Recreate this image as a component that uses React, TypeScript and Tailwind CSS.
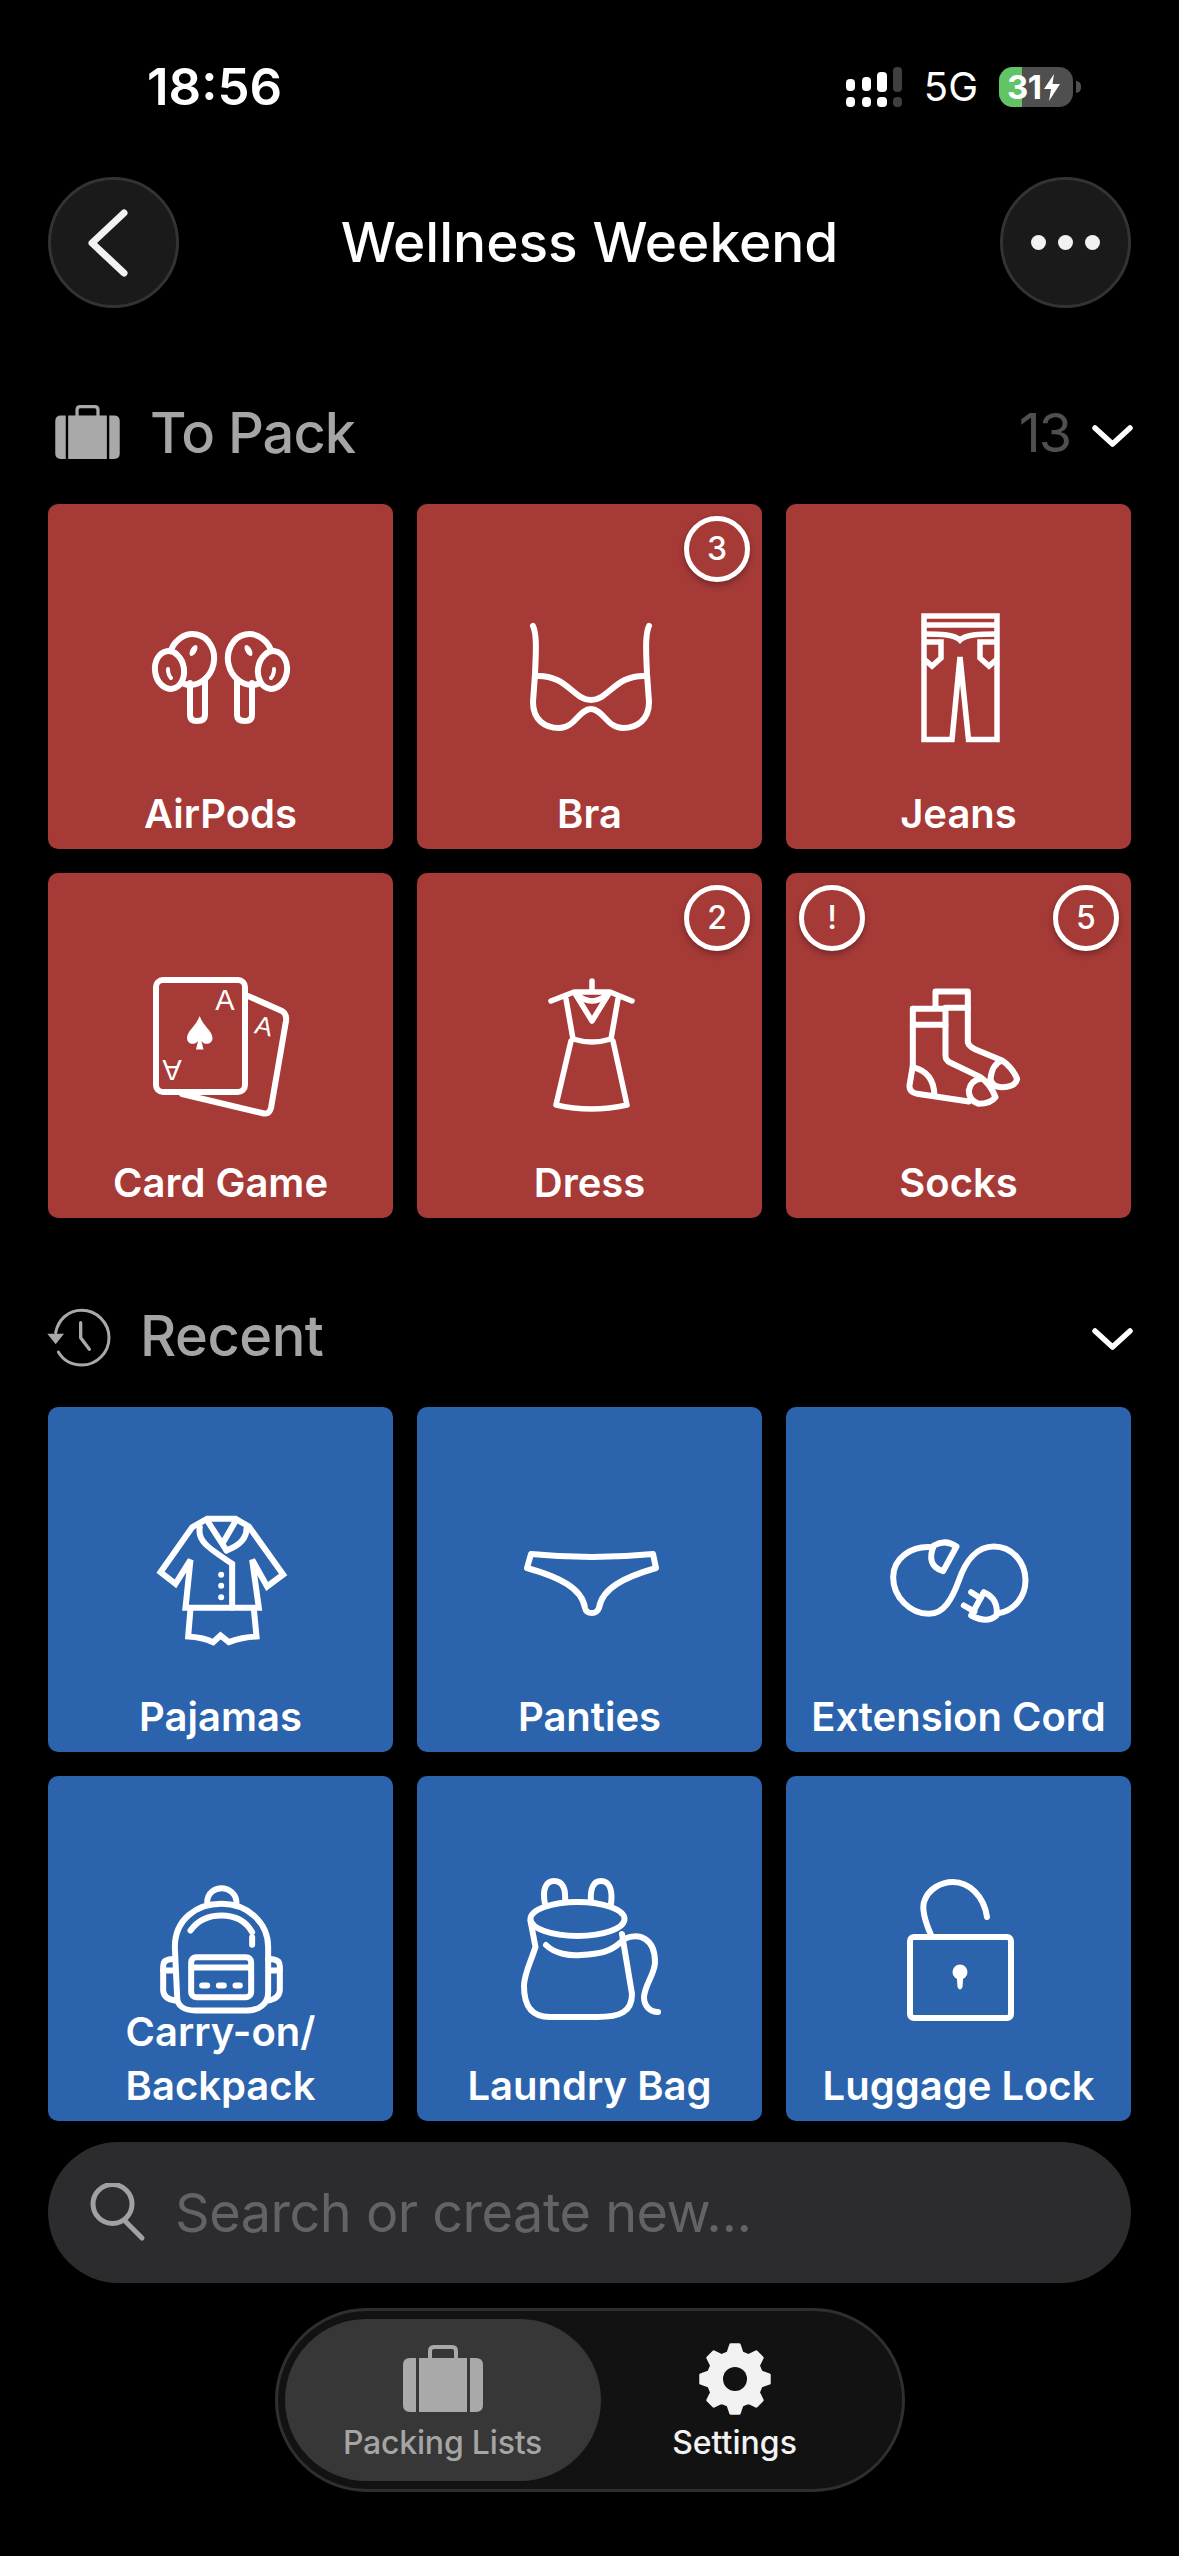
import type { ReactNode } from 'react'

const FONT = 'font-[Inter,sans-serif]'

// all item icons share a 230 box centred on the card
function ItemIcon({ children, width = 6 }: { children: ReactNode; width?: number }) {
    return (
        <svg
            viewBox="0 0 230 230"
            className="w-[230px] h-[230px] [grid-area:1/1] self-center justify-self-center"
            fill="none"
            stroke="#fff"
            strokeWidth={width}
            strokeLinecap="round"
            strokeLinejoin="round"
        >
            {children}
        </svg>
    )
}

const Bud = () => (
    <g>
        <ellipse cx="85.5" cy="97.5" rx="22.5" ry="25.5" transform="rotate(12 85.5 97.5)" />
        <path d="M84 121 V153 Q84 159 91 159 Q99 159 99 153 V118" />
        <ellipse cx="63.5" cy="108" rx="14.5" ry="19" fill="#a53a37" transform="rotate(-8 63.5 108)" />
        <ellipse cx="87.5" cy="88.5" rx="3" ry="6" fill="#fff" stroke="none" transform="rotate(30 87.5 88.5)" />
        <path d="M62 107 Q62 113 65 116" strokeWidth="4" />
    </g>
)

const AirPodsIcon = () => (
    <ItemIcon>
        <Bud />
        <g transform="translate(230 0) scale(-1 1)">
            <Bud />
        </g>
    </ItemIcon>
)

const BraIcon = () => (
    <ItemIcon>
        <path d="M58 64 C62 72 61 90 60 112 L58 140 C58 158 70 166 84 166 C100 166 104 147 116 147 C128 147 132 166 148 166 C162 166 174 158 174 140 L172 112 C171 90 170 72 174 64" />
        <path d="M60 114 C92 112 98 138 116 138 C134 138 140 112 172 114" />
    </ItemIcon>
)

const JeansIcon = () => (
    <ItemIcon width={5.5}>
        <g strokeLinejoin="miter" strokeLinecap="butt">
            <path d="M80 54 H153 V177.5 H124.5 L116 95 L108 177.5 H80 Z" />
            <path d="M80 63 H153" />
            <path d="M80 72 C95 72 110 72 116 78 C122 72 137 72 153 72" />
            <path d="M80 80 H97 V96 L88 104 L80 97" />
            <path d="M153 80 H136 V96 L145 104 L153 97" />
        </g>
    </ItemIcon>
)

const CardsIcon = () => (
    <ItemIcon>
        <rect x="50" y="49" width="89" height="112" rx="7" />
        <path d="M142 65 L176 80 Q181 83 180 90 L165 177 Q163 184 156 182 L76 163" />
        <path d="M93.7 85 C90 95 81 100 81 107 C81 113 88 115 92 110 L90 118.5 H97.5 L95.5 110 C99 115 106.500 113 106.500 107 C106.500 100 97 95 93.7 85 Z" fill="#fff" stroke="none" />
        <g fill="#fff" stroke="none" fontFamily="Liberation Sans, sans-serif" fontSize="29" textAnchor="middle">
            <text x="119" y="79">A</text>
            <text x="66" y="150" transform="rotate(180 66 139.500)">A</text>
            <text x="158" y="104" fontSize="26" transform="rotate(12 158 94)">A</text>
        </g>
    </ItemIcon>
)

const DressIcon = () => (
    <ItemIcon width={5.5}>
        <path d="M117 50 V60" />
        <path d="M76 70 L99 61 H135 L157 70" />
        <path d="M91 68 L98 108 Q117 114 136 108 L143 68" />
        <path d="M101 64 L117 90 L133 64" />
        <path d="M104 65 Q117 75 130 65" />
        <path d="M96 110 L81 174 Q116 182 152 174 L138 110" />
    </ItemIcon>
)

const SocksIcon = () => (
    <ItemIcon>
        <g transform="translate(36.5 44.5) scale(0.3333)" strokeWidth="18">
            <path d="M165 95 V48 H262 V200 Q265 212 285 222 L365 255 Q395 275 410 310 Q405 335 365 335 Q335 335 330 310 Q335 265 365 255" />
            <path d="M195 97 H262" />
            <path d="M97 100 H195 V240 Q195 255 210 262 L300 305 Q330 325 345 365 Q330 385 295 385 Q265 375 265 345 Q270 315 300 310" />
            <path d="M97 100 V270 L87 330 Q85 350 110 355 L265 378" />
            <path d="M97 148 H195" />
            <path d="M97 275 Q160 290 162 360" />
        </g>
    </ItemIcon>
)

const PajamasIcon = () => (
    <ItemIcon>
        <g transform="translate(34.500 35.500) scale(0.3333)" strokeWidth="18" strokeLinejoin="miter">
            <path d="M200 55 H285 L325 78 L428 222 L380 258 L335 178 L355 322 H135 L150 178 L105 250 L60 215 L155 80 Z" />
            <path d="M178 80 C170 120 200 140 275 190 V322" />
            <path d="M200 60 L258 150" />
            <path d="M285 62 L250 122" />
            <path d="M318 85 C318 120 290 138 258 150" />
            <path d="M150 325 L143 408 Q185 410 218 425 L240 405 L265 425 Q305 410 348 408 L340 325" />
            <g fill="#fff" stroke="none">
                <circle cx="242" cy="223" r="9" />
                <circle cx="242" cy="256" r="9" />
                <circle cx="242" cy="290" r="9" />
            </g>
        </g>
    </ItemIcon>
)

const PantiesIcon = () => (
    <ItemIcon>
        <path d="M56 89 Q117 95 178 89 L181 103 C150 112 127 123 124 143 Q122 148 117 148 Q111 148 110 143 C107 123 84 112 52 103 Z" />
    </ItemIcon>
)

const CordIcon = () => (
    <ItemIcon>
        <g transform="translate(36.500 65.500) scale(0.3333)" strokeWidth="18">
            <path d="M155 50 C90 45 38 85 38 140 C38 200 90 250 145 250 C190 250 215 205 235 150 C255 90 290 48 340 48 C395 48 435 95 435 150 C435 200 400 240 355 248" />
            <path d="M160 45 Q195 25 228 48 L188 122 Q135 105 160 45 Z" />
            <path d="M310 185 Q355 205 348 255 Q320 280 272 255 Z" />
            <path d="M272 185 L300 203" />
            <path d="M250 225 L282 243" />
        </g>
    </ItemIcon>
)

const BackpackIcon = () => (
    <ItemIcon>
        <g transform="translate(34.500 41.500) scale(0.3333)" strokeWidth="18">
            <path d="M200 82 C200 50 225 38 243 38 C265 38 288 55 288 82" />
            <path d="M110 365 L103 215 C103 130 170 85 243 85 C320 85 383 140 383 215 L383 350 C383 385 355 405 320 405 H165 C130 405 110 390 110 365 Z" />
            <path d="M150 165 C175 130 210 120 243 120 C280 120 315 135 335 170" />
            <path d="M335 185 V208" />
            <rect x="152" y="245" width="180" height="120" rx="15" />
            <path d="M158 276 H328" />
            <path d="M185 330 H200 M235 330 H250 M285 330 H298" />
            <path d="M103 250 L85 252 Q68 255 68 272 V345 Q70 370 103 375" />
            <path d="M68 285 H100" />
            <path d="M383 250 L400 252 Q418 255 418 272 V345 Q415 370 383 375" />
            <path d="M385 285 H418" />
        </g>
    </ItemIcon>
)

const LaundryIcon = () => (
    <ItemIcon>
        <ellipse cx="102.500" cy="85" rx="47" ry="17" />
        <path d="M70 70 C67 55 71 47 79 47 C88 47 91 55 90 68" />
        <path d="M116 68 C115 55 118 47 126 47 C134 47 138 55 136 70" />
        <path d="M55.500 87 L60.500 113 C55 130 49 140 49 152 C49 170 55 183 75 183 H122 C145 183 157 178 157 160 L147 100" />
        <path d="M71 111 C80 120 95 122 106 121 C125 120 135 118 146 108" />
        <path d="M149 105 C165 98 180 105 180 128 C180 140 170 150 169 163 C169 172 175 178 183 178" />
    </ItemIcon>
)

const LockIcon = () => (
    <ItemIcon>
        <rect x="66" y="103" width="101" height="81" rx="4" />
        <path d="M87 101 C80 85 78 75 80 68 C84 55 97 48 109 48 C125 48 140 62 143 83" />
        <circle cx="116" cy="138" r="7.500" fill="#fff" stroke="none" />
        <path d="M112.500 140 L113.500 153 Q116 158 118.500 153 L119.500 140 Z" fill="#fff" stroke="none" />
    </ItemIcon>
)

const Suitcase = ({ className }: { className: string }) => (
    <svg viewBox="0 0 80 67" className={className} fill="#a9a9a9">
        <path d="M27 17 V6 Q27 2 31 2 H49 Q53 2 53 6 V17" fill="none" stroke="#a9a9a9" strokeWidth="4" />
        <path d="M13 13 H7 Q0 13 0 20 V60 Q0 67 7 67 H13 Z" />
        <rect x="16" y="13" width="48" height="54" />
        <path d="M67 13 H73 Q80 13 80 20 V60 Q80 67 73 67 H67 Z" />
    </svg>
)

// 8 tooth gear, radii tuned against the tab bar icon
const gearPoints = Array.from({ length: 8 }, (_, i) => {
    const pt = (deg: number, r: number) => {
        const a = ((i * 45 + deg - 90) * Math.PI) / 180
        return `${(37 + r * Math.cos(a)).toFixed(2)},${(37 + r * Math.sin(a)).toFixed(2)}`
    }
    return [pt(-15, 27), pt(-7, 34.5), pt(7, 34.5), pt(15, 27)].join(' ')
}).join(' ')

const Gear = () => (
    <svg viewBox="0 0 74 74" className="w-[74px] h-[74px]">
        <polygon points={gearPoints} fill="#f2f2f2" stroke="#f2f2f2" strokeWidth="3" strokeLinejoin="round" />
        <circle cx="37" cy="37" r="12" fill="#121212" />
    </svg>
)

const Chevron = () => (
    <svg viewBox="0 0 41 22" className="w-[41px] h-[22px]" fill="none" stroke="#fff" strokeWidth="5.5" strokeLinecap="round" strokeLinejoin="round">
        <path d="M3 3 L20.500 19 L38 3" />
    </svg>
)

function Badge({ label, left }: { label: string; left?: boolean }) {
    return (
        <div
            className={`[grid-area:1/1] self-start mt-3 w-[66px] h-[66px] rounded-full border-[5px] border-white flex items-center justify-center text-white text-[32px] font-medium shadow-[0_3px_6px_rgba(0,0,0,0.3)] ${
                left ? 'justify-self-start ml-[13px]' : 'justify-self-end mr-3'
            }`}
        >
            {label}
        </div>
    )
}

interface Item {
    name: string
    icon: ReactNode
    count?: string
    alert?: boolean
}

function ItemCard({ item, color }: { item: Item; color: string }) {
    return (
        <div className={`grid h-[345px] rounded-[10px] overflow-hidden ${color}`}>
            <div className="contents">{item.icon}</div>
            {item.alert && <Badge label="!" left />}
            {item.count && <Badge label={item.count} />}
            <div className="[grid-area:1/1] self-end text-center whitespace-pre-line text-white text-[40px] leading-[54px] font-semibold pb-2">
                {item.name}
            </div>
        </div>
    )
}

const toPack: Item[] = [
    { name: 'AirPods', icon: <AirPodsIcon /> },
    { name: 'Bra', icon: <BraIcon />, count: '3' },
    { name: 'Jeans', icon: <JeansIcon /> },
    { name: 'Card Game', icon: <CardsIcon /> },
    { name: 'Dress', icon: <DressIcon />, count: '2' },
    { name: 'Socks', icon: <SocksIcon />, count: '5', alert: true },
]

const recent: Item[] = [
    { name: 'Pajamas', icon: <PajamasIcon /> },
    { name: 'Panties', icon: <PantiesIcon /> },
    { name: 'Extension Cord', icon: <CordIcon /> },
    { name: 'Carry-on/\nBackpack', icon: <BackpackIcon /> },
    { name: 'Laundry Bag', icon: <LaundryIcon /> },
    { name: 'Luggage Lock', icon: <LockIcon /> },
]

function StatusBar() {
    return (
        <div className="h-[177px] pt-[67px] pl-[147px] pr-[98px] flex items-start justify-between text-white">
            <span className="text-[51px] leading-10 font-semibold">18:56</span>
            <div className="flex items-center h-10">
                <svg viewBox="0 0 56 40" className="w-14 h-10" fill="#fff">
                    <rect x="0" y="12" width="9" height="12" rx="4" />
                    <rect x="16" y="10" width="9" height="14" rx="4" />
                    <rect x="31" y="5" width="10" height="20" rx="4" />
                    <rect x="47" y="0" width="9" height="25" rx="4" fill="#3f3f3f" />
                    <rect x="0" y="30" width="9" height="10" rx="4" />
                    <rect x="16" y="30" width="9" height="10" rx="4" />
                    <rect x="31" y="30" width="10" height="10" rx="4" />
                    <rect x="47" y="30" width="9" height="10" rx="4" fill="#3f3f3f" />
                </svg>
                <span className="ml-[22px] text-[40px] leading-10 font-normal">5G</span>
                <div className="ml-[21px] w-[74px] h-10 rounded-[14px] overflow-hidden bg-[#4f4f4f] flex relative">
                    <div className="w-[23px] bg-[#63c466]" />
                    <div className="absolute inset-0 flex items-center pl-[8px] gap-[2px]">
                        <span className="text-[33px] leading-none font-bold tracking-[-0.5px]">31</span>
                        <svg viewBox="0 0 16 27" className="w-4 h-[27px]" fill="#fff">
                            <path d="M10 0 L0 15 H7 L5 27 L16 10 H8.500 Z" />
                        </svg>
                    </div>
                </div>
                <div className="ml-[3px] w-[5px] h-[12px] bg-[#4f4f4f] rounded-r-full" />
            </div>
        </div>
    )
}

export default function App() {
    return (
        <div className={`w-[1179px] h-[2556px] bg-black overflow-hidden flex flex-col ${FONT}`}>
            <StatusBar />

            <div className="h-[131px] px-12 flex items-center justify-between">
                <button className="w-[131px] h-[131px] rounded-full bg-[#1a1a1a] border-[3px] border-[#333] flex items-center justify-center">
                    <svg viewBox="0 0 44 70" className="w-11 h-[70px] -ml-3" fill="none" stroke="#f2f2f2" strokeWidth="7" strokeLinecap="round" strokeLinejoin="round">
                        <path d="M38 5 L6 35 L38 65" />
                    </svg>
                </button>
                <h1 className="text-white text-[55px] font-medium leading-none">Wellness Weekend</h1>
                <button className="w-[131px] h-[131px] rounded-full bg-[#1a1a1a] border-[3px] border-[#333] flex items-center justify-center gap-[12px]">
                    <span className="w-[15px] h-[15px] rounded-full bg-[#f2f2f2]" />
                    <span className="w-[15px] h-[15px] rounded-full bg-[#f2f2f2]" />
                    <span className="w-[15px] h-[15px] rounded-full bg-[#f2f2f2]" />
                </button>
            </div>

            <div className="px-12 flex flex-col">
                <div className="h-[60px] mt-[95px] mb-[41px] flex items-center">
                    <Suitcase className="w-[65px] h-[54px] ml-[7px] -mt-0.5" />
                    <span className="ml-[30px] text-[56px] leading-none font-medium tracking-[-1px] text-[#a5a5a5]">To Pack</span>
                    <span className="ml-auto text-[54px] leading-none font-normal tracking-[-2px] text-[#4f4f4f]">13</span>
                    <div className="ml-[22px] -mr-0.5 mt-[6px] flex">
                        <Chevron />
                    </div>
                </div>
                <div className="grid grid-cols-3 gap-6">
                    {toPack.map((item) => (
                        <ItemCard key={item.name} item={item} color="bg-[#a53a37]" />
                    ))}
                </div>

                <div className="h-[60px] mt-[88px] mb-[41px] flex items-center">
                    <svg viewBox="0 0 240 270" className="w-20 h-[90px] -ml-2 shrink-0" fill="none" stroke="#a9a9a9" strokeWidth="9" strokeLinecap="round" strokeLinejoin="round">
                        <path d="M47 125 C55 85 85 58 125 58 C170 58 207 95 207 140 C207 185 170 222 125 222 C95 222 70 208 55 183" />
                        <path d="M22 128 H72 L47 160 Z" fill="#a9a9a9" stroke="none" />
                        <path d="M122 95 V140 L148 175" strokeWidth="10" />
                    </svg>
                    <span className="ml-5 text-[56px] leading-none font-medium tracking-[-0.5px] text-[#a5a5a5]">Recent</span>
                    <div className="ml-auto -mr-0.5 mt-[6px] flex">
                        <Chevron />
                    </div>
                </div>
                <div className="grid grid-cols-3 gap-6">
                    {recent.map((item) => (
                        <ItemCard key={item.name} item={item} color="bg-[#2b63ac]" />
                    ))}
                </div>

                <div className="mt-[21px] h-[141px] rounded-full bg-[#2c2c2e] flex items-center pl-10">
                    <svg viewBox="0 0 60 60" className="w-[60px] h-[60px] shrink-0" fill="none" stroke="#a0a0a5" strokeWidth="5" strokeLinecap="round">
                        <circle cx="24.500" cy="21" r="19.500" />
                        <path d="M36 37 L54 55" />
                    </svg>
                    <span className="ml-[27px] text-[54px] leading-none tracking-[-0.5px] text-[#636366]">Search or create new...</span>
                </div>

                <div className="mt-[25px] self-center w-[630px] h-[184px] rounded-[92px] bg-[#121212] border-[3px] border-[#2f2f2f] px-[7px] flex items-center">
                    <div className="w-[316px] h-[162px] rounded-[81px] bg-[#373737] flex flex-col items-center pt-[26px]">
                        <Suitcase className="w-[80px] h-[67px]" />
                        <span className="mt-[13px] text-[32px] leading-9 font-medium tracking-[-0.2px] text-[#a5a5a5]">Packing Lists</span>
                    </div>
                    <div className="w-[268px] h-[162px] flex flex-col items-center pt-[23px]">
                        <Gear />
                        <span className="mt-[9px] text-[32px] leading-9 font-medium text-[#f2f2f2]">Settings</span>
                    </div>
                </div>
            </div>
        </div>
    )
}
